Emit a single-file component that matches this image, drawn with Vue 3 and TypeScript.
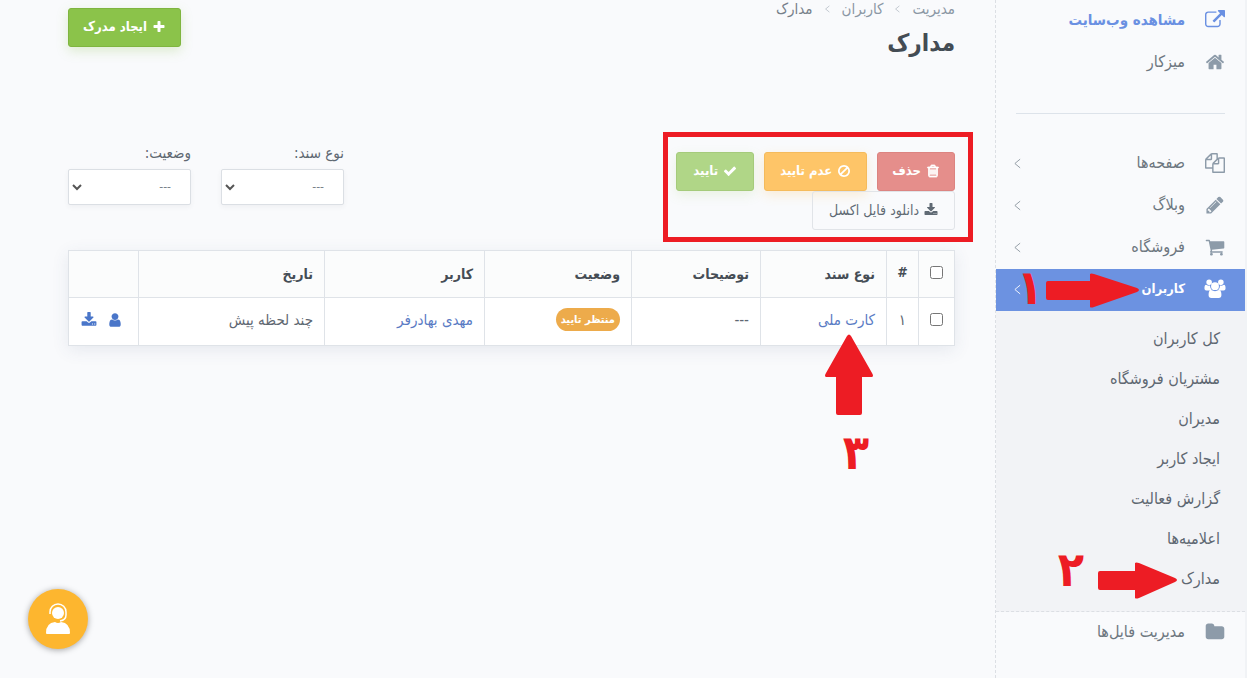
<script setup lang="ts">
import { ref } from 'vue'

interface Item {
  label: string
  icon: string
  kind?: 'link' | 'active'
}

const icons: Record<string, string> = {
  external:
    'M1408 928v320q0 119-84.5 203.5t-203.5 84.5h-832q-119 0-203.5-84.5t-84.5-203.5v-832q0-119 84.5-203.5t203.5-84.5h704q14 0 23 9t9 23v64q0 14-9 23t-23 9h-704q-66 0-113 47t-47 113v832q0 66 47 113t113 47h832q66 0 113-47t47-113v-320q0-14 9-23t23-9h64q14 0 23 9t9 23zm384-864v512q0 26-19 45t-45 19-45-19l-176-176-652 652q-10 10-23 10t-23-10l-114-114q-10-10-10-23t10-23l652-652-176-176q-19-19-19-45t19-45 45-19h512q26 0 45 19t19 45z',
  home:
    'M1472 992v480q0 26-19 45t-45 19h-384v-384h-256v384h-384q-26 0-45-19t-19-45v-480q0-1 .5-3t.5-3l575-474 575 474q1 2 1 6zm223-69l-62 74q-8 9-21 11h-3q-13 0-21-7l-692-577-692 577q-12 8-24 7-13-2-21-11l-62-74q-8-10-7-23.5t11-21.5l719-599q32-26 76-26t76 26l244 204v-195q0-14 9-23t23-9h192q14 0 23 9t9 23v408l219 182q10 8 11 21.5t-7 23.5z',
  files:
    'M1696 384q40 0 68 28t28 68v1216q0 40-28 68t-68 28h-960q-40 0-68-28t-28-68v-288h-544q-40 0-68-28t-28-68v-672q0-40 20-88t48-76l408-408q28-28 76-48t88-20h416q40 0 68 28t28 68v328q68-40 128-40h416zm-544 213l-299 299h299v-299zm-640-384l-299 299h299v-299zm196 647l316-316v-416h-384v416q0 40-28 68t-68 28h-416v640h512v-256q0-40 20-88t48-76zm956 804v-1152h-384v416q0 40-28 68t-68 28h-416v640h896z',
  pencil:
    'M491 1536l91-91-235-235-91 91v107h128v128h107zm523-928q0-22-22-22-10 0-17 7l-542 542q-7 7-7 17 0 22 22 22 10 0 17-7l542-542q7-7 7-17zm-54-192l416 416-832 832h-416v-416zm683 96q0 53-37 90l-166 166-416-416 166-165q36-38 90-38 53 0 91 38l235 234q37 39 37 91z',
  cart:
    'M704 1536q0 52-38 90t-90 38-90-38-38-90 38-90 90-38 90 38 38 90zm896 0q0 52-38 90t-90 38-90-38-38-90 38-90 90-38 90 38 38 90zm128-1088v512q0 24-16.5 42.5t-40.5 21.5l-1044 122q13 60 13 70 0 16-24 64h920q26 0 45 19t19 45-19 45-45 19h-1024q-26 0-45-19t-19-45q0-11 8-31.5t16-36 21.5-40 15.5-29.5l-177-823h-204q-26 0-45-19t-19-45 19-45 45-19h256q16 0 28.5 6.5t19.5 15.5 13 24.5 8 26 5.5 29.5 4.5 26h1201q26 0 45 19t19 45z',
  users:
    'M620 300a250 250 0 1 1-500 0 250 250 0 0 1 500 0zm1052 0a250 250 0 1 1-500 0 250 250 0 0 1 500 0zM1250 640a354 354 0 1 1-708 0 354 354 0 0 1 708 0zM470 1030H120Q-50 1030-50 850-50 520 90 520q40 30 140 60t210-4q10 260 160 380-80 10-130 74zM1322 1030h350q170 0 170-180 0-330-140-330-40 30-140 60t-210-4q-10 260-160 380 80 10 130 74zM560 990q336 200 672 0 240 0 240 450 0 264-250 264H570q-250 0-250-264 0-450 240-450z',
  folder:
    'M1728 608v704q0 92-66 158t-158 66h-1216q-92 0-158-66t-66-158v-960q0-92 66-158t158-66h320q92 0 158 66t66 158v32h672q92 0 158 66t66 158z',
  trash:
    'M704 736v576q0 14-9 23t-23 9h-64q-14 0-23-9t-9-23v-576q0-14 9-23t23-9h64q14 0 23 9t9 23zm256 0v576q0 14-9 23t-23 9h-64q-14 0-23-9t-9-23v-576q0-14 9-23t23-9h64q14 0 23 9t9 23zm256 0v576q0 14-9 23t-23 9h-64q-14 0-23-9t-9-23v-576q0-14 9-23t23-9h64q14 0 23 9t9 23zm128 724v-948h-896v948q0 22 7 40.5t14.5 27 10.5 8.5h832q3 0 10.5-8.5t14.5-27 7-40.5zm-672-1076h448l-48-117q-7-9-17-11h-317q-10 2-17 11zm928 32v64q0 14-9 23t-23 9h-96v948q0 83-47 143.5t-113 60.5h-832q-66 0-113-58.5t-47-141.5v-952h-96q-14 0-23-9t-9-23v-64q0-14 9-23t23-9h309l70-167q15-37 54-63t79-26h320q40 0 79 26t54 63l70 167h309q14 0 23 9t9 23z',
  ban:
    'M1440 893q0-161-87-295l-754 753q137 89 297 89 111 0 211.5-43.5t173.5-116.5 116-174.5 43-212.5zm-999 299l755-754q-135-91-300-91-148 0-273 73t-198 199-73 274q0 162 89 299zm1223-299q0 157-61 300t-163.5 246-245 164-298.5 61-298.5-61-245-164-163.5-246-61-300 61-299.5 163.5-245.5 245-164 298.5-61 298.5 61 245 164 163.5 245.5 61 299.5z',
  check:
    'M1671 566q0 40-28 68l-724 724-136 136q-28 28-68 28t-68-28l-136-136-362-362q-28-28-28-68t28-68l136-136q28-28 68-28t68 28l294 295 656-657q28-28 68-28t68 28l136 136q28 28 28 68z',
  download:
    'M1344 1344q0-26-19-45t-45-19-45 19-19 45 19 45 45 19 45-19 19-45zm256 0q0-26-19-45t-45-19-45 19-19 45 19 45 45 19 45-19 19-45zm128-224v320q0 40-28 68t-68 28h-1472q-40 0-68-28t-28-68v-320q0-40 28-68t68-28h465l135 136q58 56 136 56t136-56l136-136h464q40 0 68 28t28 68zm-325-569q17 41-14 70l-448 448q-18 19-45 19t-45-19l-448-448q-31-29-14-70 17-39 59-39h256v-448q0-26 19-45t45-19h256q26 0 45 19t19 45v448h256q42 0 59 39z',
  user:
    'M1536 1399q0 109-62.5 187t-150.5 78h-854q-88 0-150.5-78t-62.5-187q0-85 8.5-160.5t31.5-152 58.5-131 94-89 134.5-34.5q131 128 313 128t313-128q76 0 134.5 34.5t94 89 58.5 131 31.5 152 8.5 160.5zm-256-887q0 159-112.5 271.5t-271.5 112.5-271.5-112.5-112.5-271.5 112.5-271.5 271.5-112.5 271.5 112.5 112.5 271.5z',
  plus:
    'M1600 736v192q0 40-28 68t-68 28h-416v416q0 40-28 68t-68 28h-192q-40 0-68-28t-28-68v-416h-416q-40 0-68-28t-28-68v-192q0-40 28-68t68-28h416v-416q0-40 28-68t68-28h192q40 0 68 28t28 68v416h416q40 0 68 28t28 68z',
}

const topItems: Item[] = [
  { label: 'مشاهده وب‌سایت', icon: 'external', kind: 'link' },
  { label: 'میزکار', icon: 'home' },
]
const mainItems: Item[] = [
  { label: 'صفحه‌ها', icon: 'files' },
  { label: 'وبلاگ', icon: 'pencil' },
  { label: 'فروشگاه', icon: 'cart' },
]
const subItems: string[] = [
  'کل کاربران',
  'مشتریان فروشگاه',
  'مدیران',
  'ایجاد کاربر',
  'گزارش فعالیت',
  'اعلامیه‌ها',
  'مدارک',
]
const docType = ref<string>('')
const status = ref<string>('')
const allChecked = ref<boolean>(false)
const rowChecked = ref<boolean>(false)
</script>

<template>
  <div class="page" dir="rtl">
    <aside class="sidebar">
      <nav>
        <ul class="menu">
          <li v-for="item in topItems" :key="item.label">
            <a href="#" class="item" :class="item.kind">
              <svg class="ico" viewBox="0 0 1792 1792"><path :d="icons[item.icon]" /></svg>
              <span>{{ item.label }}</span>
            </a>
          </li>
        </ul>
        <hr class="rule" />
        <ul class="menu">
          <li v-for="item in mainItems" :key="item.label">
            <a href="#" class="item">
              <svg class="ico" viewBox="0 0 1792 1792"><path :d="icons[item.icon]" /></svg>
              <span>{{ item.label }}</span>
              <svg class="chev" viewBox="0 0 8 12"><path d="M7 1 1 6l6 5" /></svg>
            </a>
          </li>
          <li class="anchor">
            <a href="#" class="item active">
              <svg class="ico" viewBox="0 0 1792 1792"><path :d="icons.users" /></svg>
              <span>کاربران</span>
              <svg class="chev" viewBox="0 0 8 12"><path d="M7 1 1 6l6 5" /></svg>
            </a>
            <svg class="arrow arrow-one" viewBox="0 0 93 35">
              <path d="M2 8h42V1q1-1 4 0l43 14q4 2 0 4L48 34q-3 1-4 0v-7H2q-2 0-2-2V10q0-2 2-2z" />
            </svg>
            <span class="digit digit-one">۱</span>
          </li>
        </ul>
        <ul class="submenu">
          <li v-for="label in subItems" :key="label" class="anchor">
            <a href="#" class="sub">{{ label }}</a>
            <template v-if="label === 'مدارک'">
              <svg class="arrow arrow-two" viewBox="0 0 79 37">
                <path d="M2 9h35V1q1-1 4 0l36 15q4 2 0 4L41 36q-3 1-4 0v-8H2q-2 0-2-2V11q0-2 2-2z" />
              </svg>
              <span class="digit digit-two">۲</span>
            </template>
          </li>
        </ul>
        <ul class="menu">
          <li>
            <a href="#" class="item">
              <svg class="ico" viewBox="0 0 1792 1792"><path :d="icons.folder" /></svg>
              <span>مدیریت فایل‌ها</span>
            </a>
          </li>
        </ul>
      </nav>
    </aside>

    <main class="content">
      <header class="head">
        <div>
          <nav class="crumbs">
            <a href="#">مدیریت</a>
            <svg class="sep" viewBox="0 0 8 12"><path d="M7 1 1 6l6 5" /></svg>
            <a href="#">کاربران</a>
            <svg class="sep" viewBox="0 0 8 12"><path d="M7 1 1 6l6 5" /></svg>
            <span>مدارک</span>
          </nav>
          <h1>مدارک</h1>
        </div>
        <button type="button" class="btn create">
          <svg viewBox="0 0 1792 1792"><path :d="icons.plus" /></svg>ایجاد مدرک
        </button>
      </header>

      <section class="tools">
        <div class="toolbar">
          <div class="actions">
            <button type="button" class="btn danger">
              <svg viewBox="0 0 1792 1792"><path :d="icons.trash" /></svg>حذف
            </button>
            <button type="button" class="btn warn">
              <svg viewBox="0 0 1792 1792"><path :d="icons.ban" /></svg>عدم تایید
            </button>
            <button type="button" class="btn ok">
              <svg viewBox="0 0 1792 1792"><path :d="icons.check" /></svg>تایید
            </button>
          </div>
          <button type="button" class="btn excel">
            <svg viewBox="0 0 1792 1792"><path :d="icons.download" /></svg>دانلود فایل اکسل
          </button>
          <span class="frame"></span>
        </div>
        <div class="filters">
          <div class="field">
            <label for="doc-type">نوع سند:</label>
            <div class="select">
              <select id="doc-type" v-model="docType"><option value="">---</option></select>
              <svg viewBox="0 0 10 7"><path d="M1 1l4 4 4-4" /></svg>
            </div>
          </div>
          <div class="field">
            <label for="status">وضعیت:</label>
            <div class="select">
              <select id="status" v-model="status"><option value="">---</option></select>
              <svg viewBox="0 0 10 7"><path d="M1 1l4 4 4-4" /></svg>
            </div>
          </div>
        </div>
      </section>

      <table class="grid">
        <colgroup>
          <col class="c-check" /><col class="c-num" /><col class="c-type" /><col class="c-note" />
          <col class="c-status" /><col class="c-user" /><col class="c-date" /><col class="c-act" />
        </colgroup>
        <thead>
          <tr>
            <th class="mid"><input v-model="allChecked" type="checkbox" aria-label="انتخاب همه" /></th>
            <th class="mid">#</th>
            <th>نوع سند</th>
            <th>توضیحات</th>
            <th>وضعیت</th>
            <th>کاربر</th>
            <th>تاریخ</th>
            <th></th>
          </tr>
        </thead>
        <tbody>
          <tr>
            <td class="mid"><input v-model="rowChecked" type="checkbox" aria-label="انتخاب ردیف" /></td>
            <td class="mid">۱</td>
            <td class="anchor">
              <a href="#">کارت ملی</a>
              <svg class="arrow arrow-three" viewBox="0 0 48 81">
                <path d="M13 43H1q-2-1 0-4L22 2q2-3 4 0l21 37q2 3 0 4H37v36q0 2-2 2H13q-2 0-2-2V43z" />
              </svg>
              <span class="digit digit-three">۳</span>
            </td>
            <td>---</td>
            <td><span class="badge">منتظر تایید</span></td>
            <td><a href="#">مهدی بهادرفر</a></td>
            <td>چند لحظه پیش</td>
            <td>
              <div class="row-actions">
                <a href="#" aria-label="کاربر"><svg viewBox="0 0 1792 1792"><path :d="icons.user" /></svg></a>
                <a href="#" aria-label="دانلود"><svg viewBox="0 0 1792 1792"><path :d="icons.download" /></svg></a>
              </div>
            </td>
          </tr>
        </tbody>
      </table>
    </main>

    <button type="button" class="support" aria-label="پشتیبانی">
      <svg viewBox="0 0 26 32">
        <circle cx="13" cy="10" r="6" fill="#fff" />
        <path d="M5 11V9a8 8 0 0 1 16 0v3q0 5-6 6" fill="none" stroke="#fff" stroke-width="1.5" />
        <path d="M1 30q0-10 9-11 3 2 6 0 9 1 9 11 0 1-1 1H2q-1 0-1-1z" fill="#fff" />
      </svg>
    </button>
  </div>
</template>

<style>
body {
  margin: 0;
  background: #f9fafc;
}
</style>

<style scoped>
.page {
  display: flex;
  min-height: 100vh;
  background: #f9fafc;
  color: #5f6872;
  font-family: 'DejaVu Sans Condensed', 'DejaVu Sans', sans-serif;
  font-size: 15px;
  line-height: 20px;
}
a {
  color: inherit;
  text-decoration: none;
}
ul {
  list-style: none;
  margin: 0;
  padding: 0;
}
.sidebar {
  box-sizing: border-box;
  flex: 0 0 252px;
  border-left: 1px dashed #dcdfe4;
  border-right: 2px solid #f1f3f6;
  font-size: 16px;
}
.item {
  box-sizing: border-box;
  display: flex;
  align-items: center;
  gap: 20px;
  height: 42px;
  padding: 0 20px 2px 18px;
  color: #6d7780;
}
.ico {
  width: 20px;
  height: 20px;
  fill: #8d9ba9;
  overflow: visible;
}
.item.link {
  color: #6a90e2;
  font-size: 15px;
  font-weight: bold;
}
.item.link .ico {
  fill: #6a90e2;
}
.item.active {
  background: #6c92e1;
  color: #fff;
  font-size: 13px;
  font-weight: bold;
}
.item.active .ico {
  fill: #fff;
}
.chev {
  width: 7px;
  height: 11px;
  margin-right: auto;
  fill: none;
  stroke: #89939d;
}
.item.active .chev {
  stroke: #fff;
}
.rule {
  margin: 29px 20px;
  border: 0;
  border-top: 1px solid #dde3ea;
}
.submenu {
  padding: 8px 0 12px;
  background: #f2f3f6;
  border-bottom: 1px dashed #dcdfe4;
}
.sub {
  display: block;
  padding: 0 25px;
  line-height: 40px;
}
.content {
  flex: 1;
  min-width: 0;
  padding: 0 40px 0 68px;
}
.head {
  display: flex;
  justify-content: space-between;
  align-items: flex-start;
  height: 152px;
}
.crumbs {
  display: flex;
  align-items: center;
  gap: 12px;
  height: 18px;
  color: #76808a;
}
.crumbs a {
  color: #8b97a4;
}
.sep {
  width: 5px;
  height: 8px;
  fill: none;
  stroke: #a3adb7;
}
h1 {
  margin: 8px 0 0;
  font-size: 24px;
  line-height: 34px;
  color: #444c54;
}
.btn {
  box-sizing: border-box;
  display: inline-flex;
  align-items: center;
  justify-content: center;
  gap: 5px;
  height: 39px;
  padding: 0 14px 2px;
  border: 1px solid transparent;
  border-radius: 3px;
  color: #fff;
  font-family: inherit;
  font-size: 13px;
  font-weight: bold;
  white-space: nowrap;
}
.btn svg {
  width: 14px;
  height: 14px;
  fill: currentColor;
}
.create {
  margin-top: 8px;
  background: #8bc34a;
  border-color: #7fb53f;
  box-shadow: 0 4px 12px rgba(139, 195, 74, 0.25);
}
.tools {
  display: flex;
  justify-content: space-between;
  align-items: flex-start;
  margin-bottom: 20px;
}
.toolbar {
  position: relative;
}
.actions {
  display: flex;
  gap: 10px;
}
.danger {
  min-width: 77px;
  background: #e58e8b;
  border-color: #dc8481;
}
.danger svg {
  stroke: currentColor;
  stroke-width: 100;
}
.warn {
  min-width: 103px;
  background: #fec568;
  border-color: #f5bb5c;
  box-shadow: 0 4px 12px rgba(254, 180, 60, 0.2);
}
.ok {
  min-width: 78px;
  background: #b0d687;
  border-color: #a5cb7b;
  box-shadow: 0 4px 12px rgba(139, 195, 74, 0.15);
}
.excel {
  min-width: 143px;
  background: transparent;
  border-color: #e1e4e8;
  color: #606a74;
  font-size: 14px;
  font-weight: normal;
}
.frame {
  position: absolute;
  inset: -20px -18px -12px -13px;
  border: 5px solid #ed1c24;
  pointer-events: none;
}
.filters {
  display: flex;
  gap: 30px;
}
.field {
  width: 123px;
}
.field label {
  display: block;
  height: 17px;
  line-height: 2px;
}
.select {
  position: relative;
}
.select select {
  box-sizing: border-box;
  display: block;
  width: 100%;
  height: 36px;
  padding: 0 19px;
  appearance: none;
  background: #fff;
  border: 1px solid #dbdfe4;
  border-radius: 2px;
  box-shadow: 0 2px 5px rgba(60, 70, 90, 0.06);
  color: #7b838b;
  font-family: inherit;
  font-size: 12px;
}
.select svg {
  position: absolute;
  left: 4px;
  top: 15px;
  width: 10px;
  height: 7px;
  fill: none;
  stroke: #555;
  stroke-width: 2;
  pointer-events: none;
}
.grid {
  width: 100%;
  table-layout: fixed;
  border-collapse: collapse;
  background: #fff;
  box-shadow: 0 4px 16px rgba(60, 80, 120, 0.1);
}
.c-check { width: 36px; }
.c-num { width: 32px; }
.c-type { width: 126px; }
.c-note { width: 129px; }
.c-status { width: 147px; }
.c-user { width: 160px; }
.c-act { width: 70px; }
.grid th,
.grid td {
  box-sizing: border-box;
  height: 48px;
  padding: 0 11px 4px;
  border: 1px solid #dfe3e8;
  text-align: right;
  white-space: nowrap;
}
.grid th {
  height: 47px;
  padding-bottom: 0;
  background: #fbfcfc;
  color: #454d55;
  font-size: 14px;
}
.grid .mid {
  padding: 0 0 4px;
  text-align: center;
}
.grid input {
  display: block;
  width: 13px;
  height: 13px;
  margin: 0 auto;
}
.grid a {
  color: #5a7bc4;
}
.badge {
  display: inline-block;
  padding: 0 5px;
  border-radius: 12px;
  background: #edab4b;
  color: #fff;
  font-size: 11px;
  font-weight: bold;
  line-height: 23px;
  vertical-align: middle;
}
.row-actions {
  display: flex;
  gap: 10px;
  padding-right: 4px;
}
.row-actions a {
  display: flex;
}
.row-actions svg {
  width: 16px;
  height: 16px;
  fill: #4a76c9;
}
.anchor {
  position: relative;
}
.arrow {
  position: absolute;
  fill: #ed1c24;
  pointer-events: none;
}
.digit {
  position: absolute;
  color: #ed1c24;
  font-weight: bold;
  font-size: 48px;
  line-height: 48px;
  pointer-events: none;
}
.arrow-one {
  width: 93px;
  height: 35px;
  top: 4px;
  right: 106px;
}
.digit-one {
  top: -6px;
  right: 202px;
}
.arrow-two {
  width: 79px;
  height: 37px;
  top: 3px;
  right: 68px;
}
.digit-two {
  top: -14px;
  right: 161px;
}
.arrow-three {
  width: 48px;
  height: 81px;
  top: 36px;
  right: 13px;
}
.digit-three {
  top: 130px;
  right: 17px;
}
.support {
  position: fixed;
  left: 28px;
  bottom: 29px;
  display: flex;
  align-items: center;
  justify-content: center;
  width: 60px;
  height: 60px;
  padding: 0;
  border: 0;
  border-radius: 50%;
  background: #fdb62f;
  box-shadow: 0 1px 6px rgba(0, 0, 0, 0.35);
}
.support svg {
  width: 26px;
  height: 32px;
}
</style>
